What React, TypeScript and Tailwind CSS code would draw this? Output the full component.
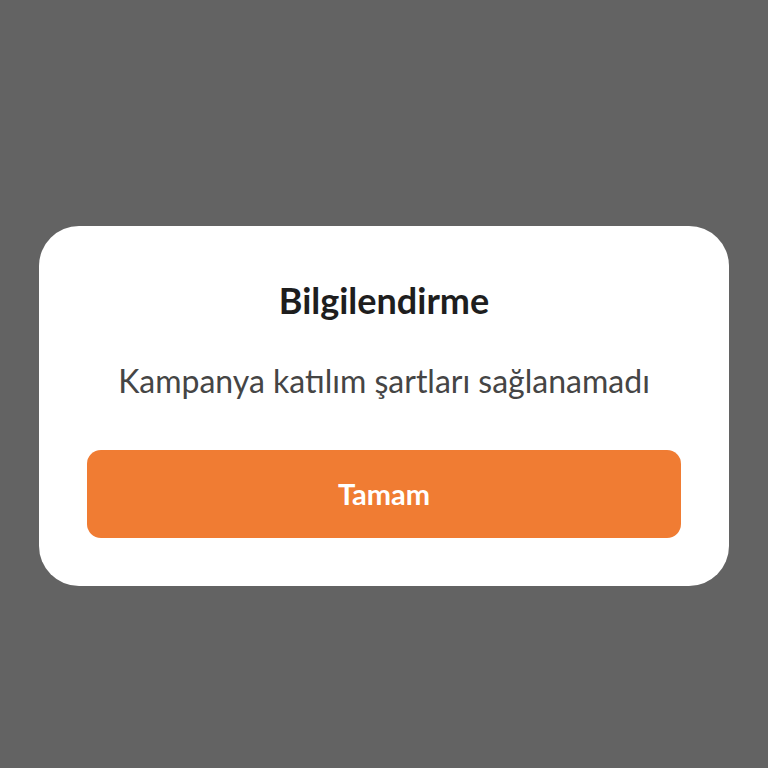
export default function App() {
  return (
    <div
      className="min-h-screen w-full bg-[#636363] flex justify-center pt-[226px]"
      style={{ fontFamily: "Lato, 'Noto Sans', sans-serif" }}
    >
      <div className="w-[690px] h-[360px] bg-white rounded-[40px] px-[48px] pt-[52px] flex flex-col items-center">
        <h2 className="text-[36px] leading-[44px] font-bold text-[#1e1e1e]">Bilgilendirme</h2>
        <p className="mt-[39px] text-[32px] leading-[40px] text-[#454545]">
          Kampanya katılım şartları sağlanamadı
        </p>
        <button className="mt-[49px] w-full h-[88px] rounded-[14px] bg-[#f07c33] text-white text-[29px] font-bold">
          Tamam
        </button>
      </div>
    </div>
  );
}
